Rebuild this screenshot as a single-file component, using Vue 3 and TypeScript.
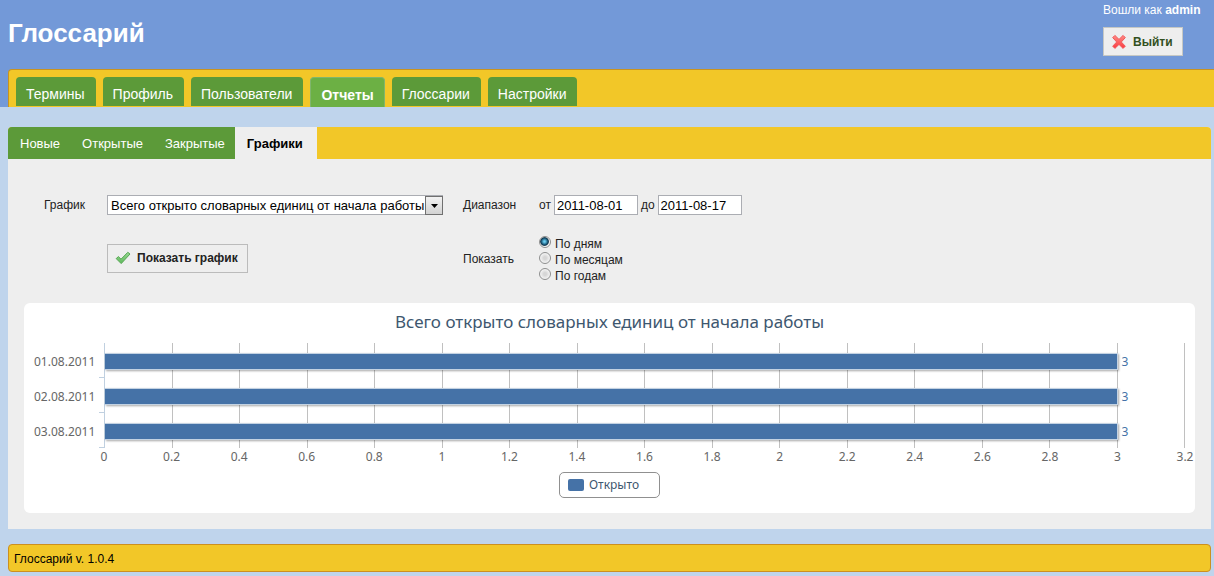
<script setup lang="ts">
import { ref } from 'vue'

interface Tab {
  title: string
  active?: boolean
}

interface Row {
  date: string
  value: number
}

const tabs: Tab[] = [
  { title: 'Термины' },
  { title: 'Профиль' },
  { title: 'Пользователи' },
  { title: 'Отчеты', active: true },
  { title: 'Глоссарии' },
  { title: 'Настройки' },
]

const subTabs: Tab[] = [
  { title: 'Новые' },
  { title: 'Открытые' },
  { title: 'Закрытые' },
  { title: 'Графики', active: true },
]

const chartTitle = 'Всего открыто словарных единиц от начала работы'
const periods = ['По дням', 'По месяцам', 'По годам']

const report = ref(chartTitle)
const dateFrom = ref('2011-08-01')
const dateTo = ref('2011-08-17')
const period = ref(periods[0])

const axisMax = 3.2
const steps = 16
const ticks = Array.from({ length: steps + 1 }, (_, i) => String(Math.round(i * 2) / 10))

const rows: Row[] = [
  { date: '01.08.2011', value: 3 },
  { date: '02.08.2011', value: 3 },
  { date: '03.08.2011', value: 3 },
]

const barWidth = (value: number): string => `${(value / axisMax) * 100}%`
</script>

<template>
  <div class="page">
    <header class="header">
      <div class="top">
        <h1 class="brand">Глоссарий</h1>
        <div class="user">
          <div class="who">Вошли как <strong>admin</strong></div>
          <button type="button" class="btn btn-exit">
            <svg width="16" height="16" viewBox="0 0 16 16" aria-hidden="true">
              <defs>
                <linearGradient id="cross" x1="0" y1="0" x2="0" y2="1">
                  <stop offset="0" stop-color="#ff8a84" />
                  <stop offset="1" stop-color="#fa3a40" />
                </linearGradient>
              </defs>
              <path
                d="M3.9 1.4 8 5.4l4.1-4 2.2 2.2L10.3 8l4 4.2-2.2 2.2L8 10.4l-4.1 4-2.2-2.2L5.7 8l-4-4.4z"
                fill="url(#cross)"
                stroke="#f0595a"
                stroke-width="1"
                stroke-linejoin="round"
              />
            </svg>
            Выйти
          </button>
        </div>
      </div>
      <nav class="tabs">
        <a v-for="t in tabs" :key="t.title" href="#" class="tab" :class="{ active: t.active }">{{ t.title }}</a>
      </nav>
    </header>

    <main class="panel">
      <nav class="subtabs">
        <a v-for="t in subTabs" :key="t.title" href="#" class="subtab" :class="{ active: t.active }">{{ t.title }}</a>
      </nav>

      <div class="content">
        <form class="filters" @submit.prevent>
          <label for="report">График</label>
          <div class="picker">
            <select id="report" v-model="report" class="field">
              <option>{{ chartTitle }}</option>
            </select>
            <span class="arrow">
              <svg width="7" height="4" viewBox="0 0 7 4" aria-hidden="true"><path d="M0 0h7L3.5 4z" fill="#000" /></svg>
            </span>
          </div>
          <span>Диапазон</span>
          <div class="range">
            <label for="from">от</label>
            <input id="from" v-model="dateFrom" type="text" class="field date" />
            <label for="to">до</label>
            <input id="to" v-model="dateTo" type="text" class="field date" />
          </div>

          <div class="submit">
            <button type="submit" class="btn">
              <svg width="16" height="16" viewBox="0 0 16 16" aria-hidden="true">
                <defs>
                  <linearGradient id="tick" x1="0" y1="0" x2="0" y2="1">
                    <stop offset="0" stop-color="#9ad894" />
                    <stop offset="1" stop-color="#5cb85a" />
                  </linearGradient>
                </defs>
                <path
                  d="M1.2 8.6 3.4 6.6 6 9.2 12.8 2.3 15 4 6.2 13.6z"
                  fill="url(#tick)"
                  stroke="#55a652"
                  stroke-width="1"
                  stroke-linejoin="round"
                />
              </svg>
              Показать график
            </button>
          </div>
          <span id="period-label">Показать</span>
          <div class="periods" role="radiogroup" aria-labelledby="period-label">
            <label v-for="p in periods" :key="p" class="period">
              <input v-model="period" type="radio" name="period" :value="p" />
              <span>{{ p }}</span>
            </label>
          </div>
        </form>

        <section class="chart">
          <h2 class="chart-title">{{ chartTitle }}</h2>
          <div class="plot">
            <div class="dates">
              <div v-for="r in rows" :key="r.date" class="date-label">{{ r.date }}</div>
            </div>
            <div class="marks">
              <i v-for="r in rows" :key="r.date"></i>
            </div>
            <div class="lines">
              <i v-for="n in steps" :key="n"></i>
            </div>
            <div class="bars">
              <div v-for="r in rows" :key="r.date" class="bar-row">
                <div class="bar" :style="{ width: barWidth(r.value) }"></div>
                <span class="value">{{ r.value }}</span>
              </div>
            </div>
            <div class="axis">
              <span v-for="t in ticks" :key="t" class="axis-label">{{ t }}</span>
            </div>
          </div>
          <div class="legend"><i class="swatch"></i>Открыто</div>
        </section>
      </div>
    </main>

    <footer class="footer">Глоссарий v. 1.0.4</footer>
  </div>
</template>

<style>
html {
  min-height: 100%;
  background: #bfd4ec;
}

body {
  margin: 0;
}
</style>

<style scoped>
.page {
  font: 12px/16px 'Liberation Sans', Arial, sans-serif;
  color: #222;
}

.page * {
  box-sizing: border-box;
}

a {
  text-decoration: none;
}

.header {
  background: #7399d8;
}

.top {
  display: flex;
  justify-content: space-between;
  align-items: flex-start;
  height: 69px;
  padding: 0 13px 0 8px;
}

.brand {
  margin: 18px 0 0;
  font-size: 26px;
  line-height: 30px;
  font-weight: bold;
  color: #fff;
}

.user {
  min-width: 98px;
  padding-top: 2px;
  color: #fff;
}

.btn {
  display: flex;
  align-items: center;
  gap: 6px;
  height: 29px;
  padding: 0 9px 0 7px;
  border: 1px solid #bbb;
  background: #eee;
  font: bold 12px/16px 'Liberation Sans', Arial, sans-serif;
  color: #222;
}

.btn-exit {
  margin-top: 9px;
  border-color: #c6c8c4;
  color: #33501f;
}

.tabs {
  display: flex;
  gap: 7px;
  margin-left: 8px;
  padding: 7px 7px 0;
  border: 1px solid #c9931f;
  border-width: 1px 0 0 1px;
  border-top-left-radius: 4px;
  background: #f2c728;
}

.tab {
  height: 29px;
  margin-bottom: 1px;
  padding: 0 11px 0 10px;
  border-radius: 4px 4px 0 0;
  background: #5c9a39;
  font-size: 14px;
  line-height: 34px;
  color: #fff;
}

.tab.active {
  height: 30px;
  margin-bottom: 0;
  padding: 0 10px;
  border: 1px solid #7fb66c;
  border-bottom: 0;
  background: #6cb044;
  font-weight: bold;
}

.panel {
  margin: 20px 3px 0 8px;
  border-radius: 4px 4px 0 0;
  background: #eee;
  overflow: hidden;
}

.subtabs {
  display: flex;
  background: #f2c728;
}

.subtab {
  height: 32px;
  padding: 0 10px 0 12px;
  background: #5c9a39;
  font-size: 13px;
  line-height: 34px;
  color: #fff;
}

.subtab.active {
  padding-right: 14px;
  background: #eee;
  font-weight: bold;
  color: #000;
}

.content {
  padding: 36px 16px 16px;
}

.filters {
  display: grid;
  grid-template-columns: 63px 356px 76px auto;
  row-gap: 20px;
  align-items: center;
  justify-content: start;
  margin-left: 20px;
}

.field {
  height: 20px;
  border: 1px solid #abadb3;
  border-radius: 0;
  background: #fff;
  font: 13px/16px 'Liberation Sans', Arial, sans-serif;
  color: #000;
}

.picker {
  position: relative;
  width: 336px;
}

.picker .field {
  display: block;
  width: 100%;
  padding: 1px 17px 0 3px;
  appearance: none;
}

.arrow {
  position: absolute;
  top: 1px;
  right: 0;
  bottom: 0;
  display: flex;
  align-items: center;
  justify-content: center;
  width: 18px;
  border: 1px solid #707070;
  background: linear-gradient(#f2f2f2, #d2d2d2);
  pointer-events: none;
}

.range {
  display: flex;
  align-items: center;
  gap: 3px;
}

.date {
  width: 84px;
  padding: 0 2px;
}

.submit {
  grid-column: 2;
  display: flex;
  padding-bottom: 2px;
}

.period {
  display: flex;
  align-items: flex-start;
  gap: 4px;
  height: 16px;
  line-height: 18px;
}

.period input {
  width: 12px;
  height: 12px;
  margin: 1px 0 0;
  border: 1px solid #8e8f8f;
  border-radius: 50%;
  appearance: none;
  background: radial-gradient(circle, #d6d6d6 0 20%, #f8f8f8 75%);
}

.period input:checked {
  background: radial-gradient(circle at 45% 45%, #6cd0f4 0 8%, #14506f 42%, #0e3248 50%, #f4f4f4 62%);
}

.chart {
  margin-top: 20px;
  padding: 8px 10px 15px;
  border-radius: 6px;
  background: #fff;
  font: 12px/16px 'Noto Sans', sans-serif;
  color: #666;
}

.chart-title {
  margin: 0 0 10px;
  font-size: 17px;
  line-height: 22px;
  font-weight: normal;
  text-align: center;
  color: #3e576f;
}

.plot {
  display: grid;
  grid-template-columns: 65px 5px minmax(0, 1fr);
  grid-template-rows: 105px 23px;
}

.dates,
.marks,
.bars {
  display: grid;
  grid-template-rows: repeat(3, 1fr);
}

.date-label {
  display: flex;
  align-items: center;
  justify-content: flex-end;
  padding: 2px 4px 0 0;
}

.marks i {
  border-bottom: 1px solid #c0d0e0;
}

.lines {
  grid-area: 1 / 3;
  display: grid;
  grid-template-columns: repeat(16, 1fr);
  border-left: 1px solid #c0d0e0;
}

.lines i {
  border-right: 1px solid #c0c0c0;
}

.bars {
  grid-area: 1 / 3;
  z-index: 1;
  padding-left: 1px;
}

.bar-row {
  display: flex;
  align-items: center;
  gap: 4px;
  padding-top: 2px;
}

.bar {
  height: 17px;
  border: 1px solid #c3d2e2;
  border-left: 0;
  background: #4572a7;
  box-shadow: 1px 1px 2px rgba(0, 0, 0, 0.35);
}

.value {
  color: #4572a7;
}

.axis {
  grid-area: 2 / 3;
  display: flex;
  justify-content: space-between;
}

.axis-label {
  display: flex;
  justify-content: center;
  width: 0;
  padding-top: 1px;
}

.legend {
  display: flex;
  align-items: center;
  gap: 5px;
  width: fit-content;
  height: 26px;
  margin: 1px auto 0;
  padding: 0 20px 0 8px;
  border: 1px solid #909090;
  border-radius: 5px;
  color: #3e576f;
}

.swatch {
  width: 16px;
  height: 12px;
  border-radius: 2px;
  background: #4572a7;
}

.footer {
  margin: 15px 3px 4px 8px;
  padding: 6px 5px 4px;
  border: 1px solid #cc8f20;
  border-radius: 4px;
  background: #f2c728;
  color: #000;
}
</style>
